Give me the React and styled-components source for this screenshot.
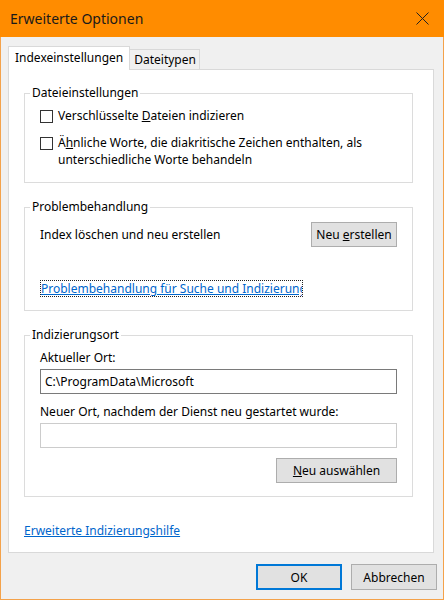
import React from "react";
import styled, { createGlobalStyle } from "styled-components";

const GlobalStyle = createGlobalStyle`
  html, body {
    margin: 0;
    padding: 0;
    background: #f0f0f0;
  }
  body {
    font-family: "Noto Sans", "Liberation Sans", sans-serif;
    font-size: 12px;
    color: #000;
  }
`;

const Window = styled.div`
  width: 444px;
  height: 600px;
  box-sizing: border-box;
  display: flex;
  flex-direction: column;
  background: #f0f0f0;
  border: 1px solid #f4a24a;
  border-top: none;
`;

const TitleBar = styled.div`
  height: 37px;
  flex: none;
  display: flex;
  align-items: center;
  justify-content: space-between;
  background: #ff8c00;
  margin: 0 -1px;
  padding-left: 10px;
`;

const Title = styled.span`
  font-size: 14px;
  color: #1a1a1a;
`;

const CloseButton = styled.div`
  width: 46px;
  height: 37px;
  display: flex;
  align-items: center;
  justify-content: center;
  box-sizing: border-box;
  padding-left: 2px;
`;

const Body = styled.div`
  flex: 1;
  display: flex;
  flex-direction: column;
  padding: 9px 9px 0 7px;
  min-height: 0;
`;

const TabStrip = styled.div`
  display: flex;
  align-items: flex-end;
  height: 24px;
  margin-bottom: -1px;
`;

const Tab = styled.div`
  box-sizing: border-box;
  height: ${({ $active }) => ($active ? "24px" : "21px")};
  padding: ${({ $active }) => ($active ? "3px 6px 0 6px" : "2px 3px 0 4px")};
  background: ${({ $active }) => ($active ? "#fff" : "#f0f0f0")};
  border: 1px solid #d9d9d9;
  border-bottom: ${({ $active }) => ($active ? "none" : "1px solid #d9d9d9")};
  ${({ $active }) => ($active ? "position: relative; z-index: 1;" : "border-left: none;")}
  line-height: 16px;
`;

const Panel = styled.div`
  flex: 1;
  min-height: 0;
  background: #fff;
  border: 1px solid #d9d9d9;
  padding: 15px 20px 0 15px;
`;

const Group = styled.fieldset`
  margin: 0 0 16px 0;
  border: 1px solid #dcdcdc;
  padding: ${({ $top }) => $top}px 15px ${({ $bottom }) => $bottom}px 15px;
  min-width: 0;
`;

const Legend = styled.legend`
  margin-left: -10px;
  padding: 0 2px;
  line-height: 16px;
`;

const CheckRow = styled.label`
  display: flex;
  align-items: flex-start;
  gap: 5px;
  line-height: 17px;
  margin-top: ${({ $gap }) => $gap || 0}px;
`;

const Box = styled.span`
  flex: none;
  width: 13px;
  height: 13px;
  box-sizing: border-box;
  border: 1px solid #333;
  background: #fff;
  margin-top: 3px;
`;

const ActionRow = styled.div`
  display: flex;
  align-items: center;
  justify-content: space-between;
  line-height: 17px;
`;

const Button = styled.button`
  box-sizing: border-box;
  width: ${({ $w }) => $w}px;
  height: ${({ $h }) => $h || 25}px;
  background: #e1e1e1;
  border: ${({ $default }) => ($default ? "2px solid #0078d7" : "1px solid #adadad")};
  font-family: inherit;
  font-size: 12px;
  color: #000;
  padding: 0;
  margin-top: ${({ $gap }) => $gap || 0}px;
  align-self: ${({ $end }) => ($end ? "flex-end" : "auto")};
`;

const FocusLink = styled.a`
  display: block;
  width: 263px;
  box-sizing: border-box;
  margin-top: 33px;
  border: 1px dotted #222;
  line-height: 15px;
  white-space: nowrap;
  overflow: hidden;
  color: #0066cc;
  text-decoration: underline;
`;

const Label = styled.div`
  line-height: 17px;
  margin-top: ${({ $gap }) => $gap || 0}px;
`;

const Field = styled.input`
  display: block;
  box-sizing: border-box;
  width: 100%;
  height: 25px;
  margin-top: 3px;
  border: 1px solid ${({ $muted }) => ($muted ? "#cccccc" : "#7a7a7a")};
  background: #fff;
  padding: 0 4px;
  font-family: inherit;
  font-size: 12px;
  color: #000;
  outline: none;
`;

const Column = styled.div`
  display: flex;
  flex-direction: column;
`;

const HelpLink = styled.a`
  display: inline-block;
  margin-top: 9px;
  line-height: 17px;
  color: #0066cc;
  text-decoration: underline;
`;

const Footer = styled.div`
  height: 46px;
  flex: none;
  display: flex;
  align-items: flex-start;
  justify-content: flex-end;
  gap: 9px;
  padding: 11px 6px 0 0;
  box-sizing: border-box;
`;

const CloseIcon = () => (
  <svg width="13" height="13" viewBox="0 0 13 13">
    <path d="M0.5 0.5 L12.5 12.5 M12.5 0.5 L0.5 12.5" stroke="#222" strokeWidth="1" fill="none" />
  </svg>
);

export default function App() {
  return (
    <>
      <GlobalStyle />
      <Window>
        <TitleBar>
          <Title>Erweiterte Optionen</Title>
          <CloseButton>
            <CloseIcon />
          </CloseButton>
        </TitleBar>
        <Body>
          <TabStrip>
            <Tab $active>Indexeinstellungen</Tab>
            <Tab>Dateitypen</Tab>
          </TabStrip>
          <Panel>
            <Group $top={6} $bottom={14}>
              <Legend>Dateieinstellungen</Legend>
              <CheckRow>
                <Box />
                <span>
                  Verschlüsselte <u>D</u>ateien indizieren
                </span>
              </CheckRow>
              <CheckRow $gap={10}>
                <Box />
                <span>
                  Ä<u>h</u>nliche Worte, die diakritische Zeichen enthalten, als
                  <br />
                  unterschiedliche Worte behandeln
                </span>
              </CheckRow>
            </Group>

            <Group $top={7} $bottom={13}>
              <Legend>Problembehandlung</Legend>
              <ActionRow>
                <span>Index löschen und neu erstellen</span>
                <Button $w={86}>
                  Neu <u>e</u>rstellen
                </Button>
              </ActionRow>
              <FocusLink>Problembehandlung für Suche und Indizierung</FocusLink>
            </Group>

            <Group $top={6} $bottom={13}>
              <Legend>Indizierungsort</Legend>
              <Column>
                <Label>Aktueller Ort:</Label>
                <Field readOnly value="C:\ProgramData\Microsoft" />
                <Label $gap={9}>Neuer Ort, nachdem der Dienst neu gestartet wurde:</Label>
                <Field readOnly $muted value="" />
                <Button $w={121} $gap={10} $end>
                  <u>N</u>eu auswählen
                </Button>
              </Column>
            </Group>

            <HelpLink>Erweiterte Indizierungshilfe</HelpLink>
          </Panel>
        </Body>
        <Footer>
          <Button $w={86} $h={26} $default>
            OK
          </Button>
          <Button $w={86} $h={26}>
            Abbrechen
          </Button>
        </Footer>
      </Window>
    </>
  );
}
